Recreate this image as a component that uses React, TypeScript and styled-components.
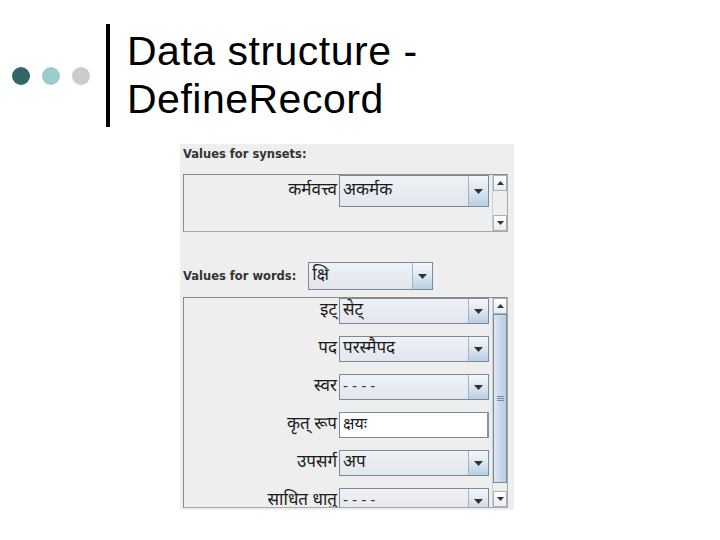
import styled, { createGlobalStyle } from 'styled-components'

const GlobalStyle = createGlobalStyle`
  html, body {
    margin: 0;
    padding: 0;
    background: #ffffff;
  }
  * {
    box-sizing: border-box;
  }
`

const DEVA = `"Noto Sans Devanagari", "Lohit Devanagari", "Noto Sans", "DejaVu Sans", sans-serif`

type Row = { label: string, value: string, kind: 'combo' | 'text' }

const wordRows: Row[] = [
  { label: 'इट्', value: 'सेट्', kind: 'combo' },
  { label: 'पद', value: 'परस्मैपद', kind: 'combo' },
  { label: 'स्वर', value: '----', kind: 'combo' },
  { label: 'कृत् रूप', value: 'क्षयः', kind: 'text' },
  { label: 'उपसर्ग', value: 'अप', kind: 'combo' },
  { label: 'साधित धातु', value: '----', kind: 'combo' }
]

function Arrow ({ up, w, h }: { up?: boolean, w: number, h: number }) {
  const points = up ? `0,${h} ${w / 2},0 ${w},${h}` : `0,0 ${w},0 ${w / 2},${h}`
  return (
    <svg width={w} height={h} viewBox={`0 0 ${w} ${h}`}>
      <polygon points={points} fill="#333333" />
    </svg>
  )
}

function ComboBox ({ value, height, width }: { value: string, height: number, width?: number }) {
  return (
    <StyledCombo $h={height} $w={width}>
      <span className={value.startsWith('-') ? 'dashes' : ''}>{value}</span>
      <div className='arrow'><Arrow w={9} h={5} /></div>
    </StyledCombo>
  )
}

function ScrollBar ({ thumb }: { thumb?: boolean }) {
  return (
    <StyledScrollBar>
      <ScrollButton><Arrow up w={7} h={4} /></ScrollButton>
      <Track $thumb={thumb}>
        {thumb && <Thumb><div className='grip' /></Thumb>}
      </Track>
      <ScrollButton><Arrow w={7} h={4} /></ScrollButton>
    </StyledScrollBar>
  )
}

export default function App () {
  return (
    <>
      <GlobalStyle />
      <Slide>
        <Header>
          <Bullets>
            <Dot $color='#336666' />
            <Dot $color='#99cccc' />
            <Dot $color='#cccccc' />
          </Bullets>
          <Divider />
          <Title>Data structure -<br />DefineRecord</Title>
        </Header>

        <Panel>
          <SectionLabel>Values for synsets:</SectionLabel>
          <ListBox $h={58}>
            <Rows $gap={0}>
              <FieldRow>
                <label>कर्मवत्त्व</label>
                <ComboBox value='अकर्मक' height={32} />
              </FieldRow>
            </Rows>
            <ScrollBar />
          </ListBox>

          <WordsRow>
            <SectionLabel as='span'>Values for words:</SectionLabel>
            <ComboBox value='क्षि' height={28} width={125} />
          </WordsRow>

          <ListBox $h={211}>
            <Rows $gap={12}>
              {wordRows.map(row => (
                <FieldRow key={row.label}>
                  <label>{row.label}</label>
                  {row.kind === 'combo'
                    ? <ComboBox value={row.value} height={26} />
                    : <TextField>{row.value}</TextField>}
                </FieldRow>
              ))}
            </Rows>
            <ScrollBar thumb />
          </ListBox>
        </Panel>
      </Slide>
    </>
  )
}

const Slide = styled.main`
  width: 720px;
  height: 540px;
  overflow: hidden;
  background: #ffffff;
  display: flex;
  flex-direction: column;
`

const Header = styled.header`
  display: flex;
  align-items: center;
  padding: 24px 0 0 12px;
`

const Bullets = styled.div`
  display: flex;
  gap: 12px;
`

const Dot = styled.span<{ $color: string }>`
  width: 18px;
  height: 18px;
  border-radius: 50%;
  background: ${p => p.$color};
`

const Divider = styled.div`
  width: 4px;
  height: 103px;
  background: #000000;
  margin-left: 16px;
`

const Title = styled.h1`
  margin: 0 0 0 17px;
  padding-top: 3px;
  align-self: flex-start;
  font-family: "Liberation Sans", Arial, sans-serif;
  font-weight: normal;
  font-size: 41px;
  line-height: 48px;
  letter-spacing: 0.5px;
  color: #000000;
`

const Panel = styled.section`
  margin: 17px 0 0 180px;
  width: 334px;
  height: 366px;
  background: #eeeeee;
  padding: 2px 6px 2px 3px;
  display: flex;
  flex-direction: column;
  overflow: hidden;
`

const SectionLabel = styled.div`
  height: 28px;
  padding-left: 0;
  font-family: "DejaVu Sans", sans-serif;
  font-weight: bold;
  font-size: 11.5px;
  line-height: 17px;
  color: #333333;
`

const WordsRow = styled.div`
  display: flex;
  align-items: center;
  gap: 12px;
  margin: 30px 0 7px;

  ${SectionLabel} {
    height: auto;
  }
`

const ListBox = styled.div<{ $h: number }>`
  height: ${p => p.$h}px;
  flex-shrink: 0;
  border: 1px solid #8c8c8c;
  border-right-color: #a8a8a8;
  border-bottom-color: #a8a8a8;
  display: grid;
  grid-template-columns: 1fr 15px;
  overflow: hidden;
`

const Rows = styled.div<{ $gap: number }>`
  display: flex;
  flex-direction: column;
  gap: ${p => p.$gap}px;
  padding: 0 3px 0 0;
  overflow: hidden;
`

const FieldRow = styled.div`
  display: grid;
  grid-template-columns: 1fr 150px;
  align-items: center;
  column-gap: 2px;
  flex-shrink: 0;

  label {
    text-align: right;
    font-family: ${DEVA};
    font-size: 17px;
    color: #1a1a1a;
    white-space: nowrap;
  }
`

const StyledCombo = styled.div<{ $h: number, $w?: number }>`
  height: ${p => p.$h}px;
  width: ${p => (p.$w ? `${p.$w}px` : 'auto')};
  border: 1px solid #7a8a99;
  background: linear-gradient(#eef1f5, #e2e7ee);
  display: flex;
  align-items: stretch;
  overflow: hidden;

  span {
    flex: 1;
    padding-left: 3px;
    display: flex;
    align-items: center;
    font-family: ${DEVA};
    font-size: 17px;
    color: #1a1a1a;
    white-space: nowrap;
  }

  span.dashes {
    letter-spacing: 4px;
    font-size: 15px;
    color: #333333;
  }

  .arrow {
    width: 20px;
    flex-shrink: 0;
    border-left: 1px solid #a3b1c0;
    background: linear-gradient(#f4f7fa 0%, #dce6f0 50%, #b8cfe5 100%);
    display: flex;
    align-items: center;
    justify-content: center;
  }
`

const TextField = styled.div`
  height: 26px;
  background: #ffffff;
  border: 1px solid #7a8a99;
  border-right: 2px solid #8a96a3;
  padding-left: 3px;
  display: flex;
  align-items: center;
  font-family: ${DEVA};
  font-size: 16px;
  color: #1a1a1a;
`

const StyledScrollBar = styled.div`
  display: flex;
  flex-direction: column;
  background: #eeeeee;
  border-left: 1px solid #c9d1da;
`

const ScrollButton = styled.div`
  height: 16px;
  flex-shrink: 0;
  border: 1px solid #a3b1c0;
  background: linear-gradient(#ffffff, #e6ecf2);
  display: flex;
  align-items: center;
  justify-content: center;
`

const Track = styled.div<{ $thumb?: boolean }>`
  flex: 1;
  display: flex;
  flex-direction: column;
  padding-bottom: ${p => (p.$thumb ? 8 : 0)}px;
  background: #eeeeee;
`

const Thumb = styled.div`
  flex: 1;
  border: 1px solid #7a8a99;
  background: linear-gradient(90deg, #dde8f3 0%, #c8d9ea 50%, #b8cfe5 100%);
  display: flex;
  align-items: center;
  justify-content: center;

  .grip {
    width: 7px;
    height: 5px;
    border-top: 1px solid #7a8a99;
    border-bottom: 1px solid #7a8a99;
    position: relative;
  }
  .grip::after {
    content: '';
    position: absolute;
    left: 0;
    right: 0;
    top: 1px;
    border-top: 1px solid #7a8a99;
  }
`
